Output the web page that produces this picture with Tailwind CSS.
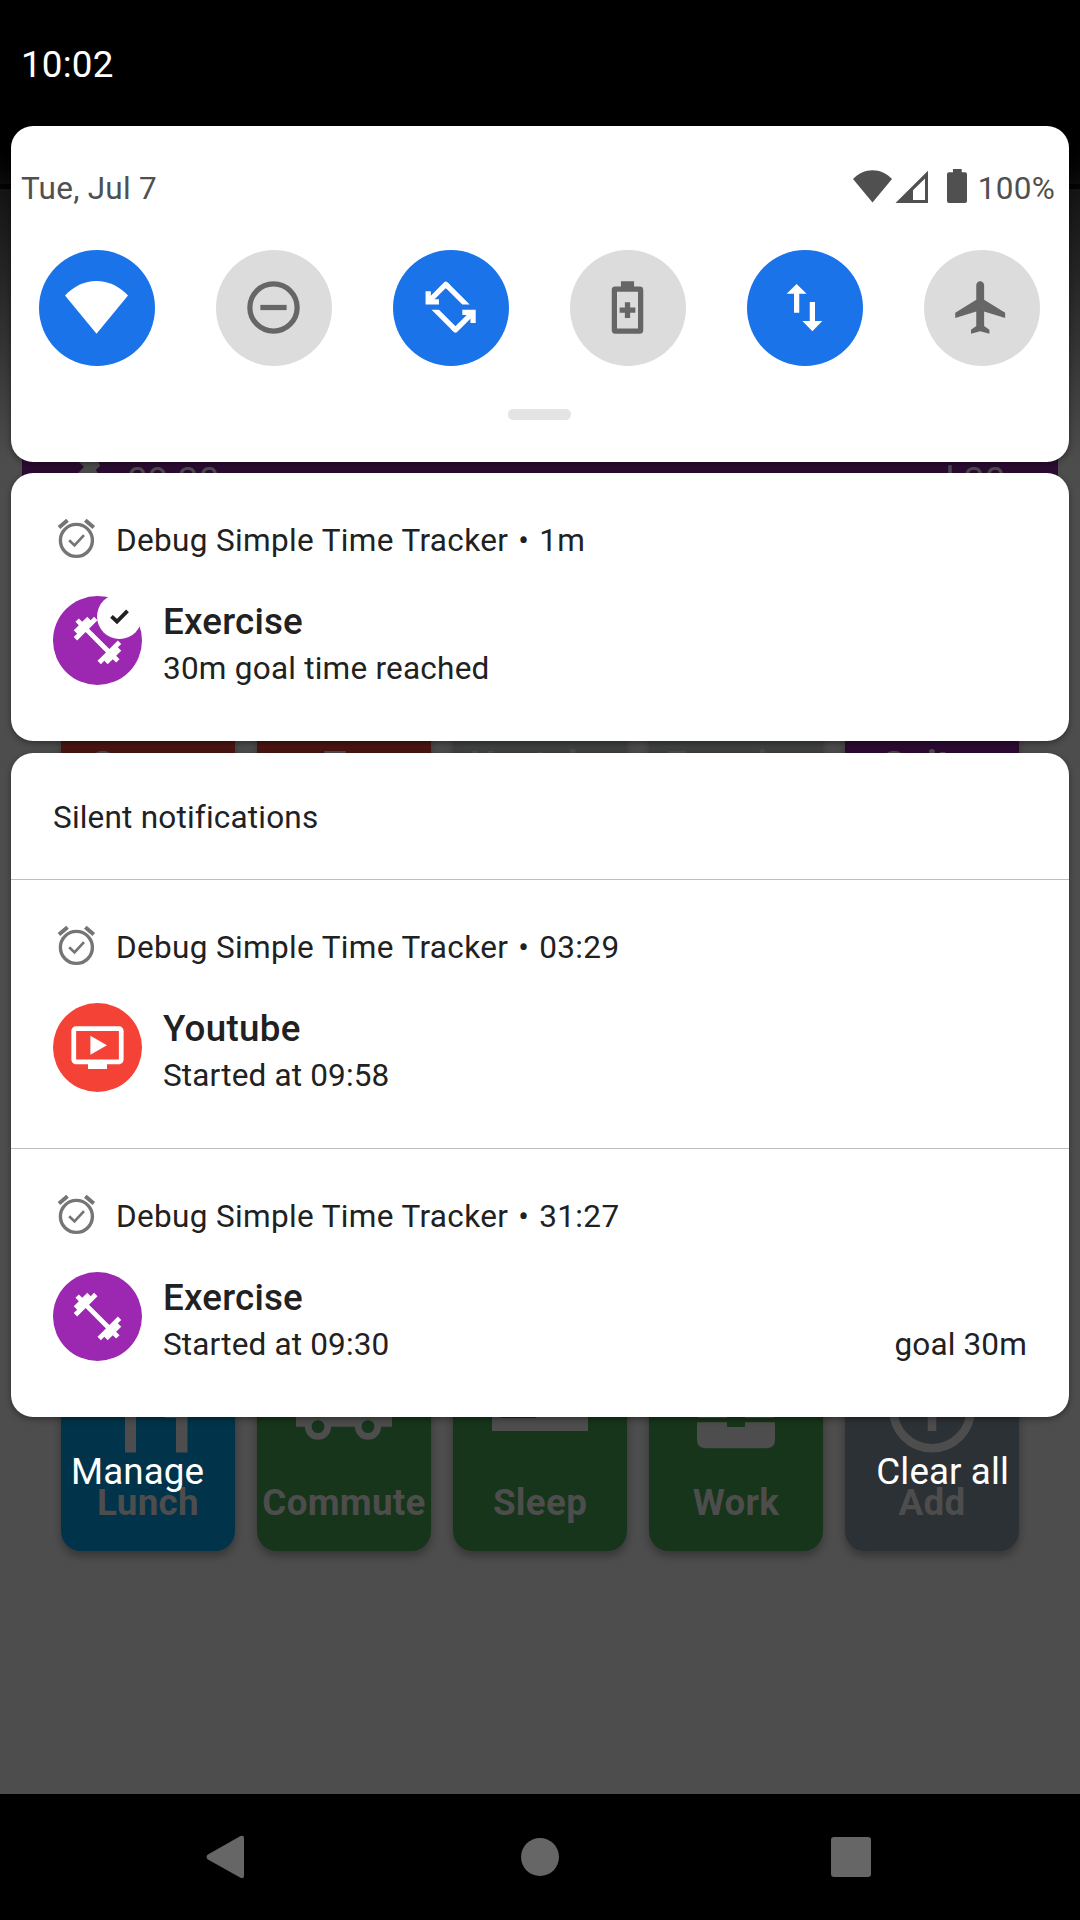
<!DOCTYPE html>
<html lang="en">
<head>
<meta charset="utf-8">
<title>Notifications</title>
<script src="https://cdn.jsdelivr.net/npm/@tailwindcss/browser@4"></script>
</head>
<body class="bg-black font-['Roboto',sans-serif] tracking-[0.2px]">
<svg class="hidden">
  <symbol id="alarm" viewBox="0 0 42 42">
    <g fill="none" stroke="#757575"><circle cx="21.4" cy="22.4" r="16" stroke-width="3.4"/><path d="M4 9.6 12.5 2.3M38.8 9.6 30.3 2.3" stroke-width="4"/><path d="M14.2 22.3 19.5 27.4 29 17.2" stroke-width="2.7"/></g>
  </symbol>
  <symbol id="dumbbell" viewBox="0 0 24 24"><path fill="#fff" d="M20.57 14.86L22 13.43 20.57 12 17 15.57 8.43 7 12 3.43 10.57 2 9.14 3.43 7.71 2 5.57 4.14 4.14 2.71 2.71 4.14l1.43 1.43L2 7.71l1.43 1.43L2 10.57 3.43 12 7 8.43 15.57 17 12 20.57 13.43 22l1.43-1.43L16.29 22l2.14-2.14 1.43 1.43 1.43-1.43-1.43-1.43L22 16.29z"/></symbol>
</svg>
<div class="relative w-[1080px] h-[1920px] overflow-hidden bg-[#4d4d4d]">

  <!-- dimmed app behind the shade -->
  <div class="absolute inset-0 flex flex-col">
    <div class="h-[126px] bg-black"></div>
    <div class="h-[58px] bg-linear-to-b from-black to-[#0c0c0c]"></div>
    <div class="h-[5px] bg-[#030303]"></div>
    <div class="h-[271px] bg-linear-to-b from-[#141414] to-[#4d4d4d]"></div>
    <div class="h-[26px] -mt-[6px] mx-[22px] bg-[#2d0b33] text-[#4d4d4d] text-[36.75px] leading-[43px] flex items-start overflow-hidden">
      <svg class="w-[24px] h-[19px] ml-[56px]" viewBox="0 0 24 19"><path fill="#4d4d4d" d="M0 7 6 13 0 19H20L17.7 16 22.2 11.7 20 7Z"/></svg>
      <span class="ml-[25px] mt-[5px]">09:30</span>
      <span class="ml-auto mr-[20px] mt-[5px]">goal 30m</span>
    </div>
    <div class="grid grid-cols-5 gap-x-[22px] mx-[61px] mt-[109px] text-[36.75px] leading-[43px] font-bold text-[#4d4d4d] text-center">
      <div class="h-[224px] rounded-[20px] bg-[#4a1512] pt-[154px] shadow-[0_4px_8px_rgba(0,0,0,0.25)]">Games</div>
      <div class="h-[224px] rounded-[20px] bg-[#4a1512] pt-[154px] shadow-[0_4px_8px_rgba(0,0,0,0.25)]">Tv</div>
      <div class="h-[224px] rounded-[20px] bg-[#3f4041] pt-[154px] shadow-[0_4px_8px_rgba(0,0,0,0.25)]">Youtube</div>
      <div class="h-[224px] rounded-[20px] bg-[#3f4041] pt-[154px] shadow-[0_4px_8px_rgba(0,0,0,0.25)]">Exercise</div>
      <div class="h-[224px] rounded-[20px] bg-[#2d0b33] pt-[154px] shadow-[0_4px_8px_rgba(0,0,0,0.25)]">Guitar</div>
    </div>
    <div class="grid grid-cols-5 gap-x-[22px] mx-[61px] mt-[514px] text-[36.75px] leading-[43px] font-bold text-[#4d4d4d] tracking-[0.3px]">
      <div class="h-[224px] rounded-[20px] bg-[#01344a] pt-[31px] flex flex-col items-center shadow-[0_5px_9px_rgba(0,0,0,0.3)]">
        <svg class="w-[104px] h-[104px] mb-[19px]" viewBox="0 0 104 104"><path fill="#4d4d4d" d="M29 0H40V94.500H29ZM69 60V0H91.500V94.500H80V60Z"/></svg>
        <span>Lunch</span></div>
      <div class="h-[224px] rounded-[20px] bg-[#17351a] pt-[31px] flex flex-col items-center shadow-[0_5px_9px_rgba(0,0,0,0.3)]">
        <svg class="w-[104px] h-[104px] mb-[19px]" viewBox="0 0 104 104"><path fill="#4d4d4d" d="M4 20H100V68.700H4Z"/><g fill="#17351a" stroke="#4d4d4d" stroke-width="6.700"><circle cx="26" cy="68.600" r="9.800"/><circle cx="76" cy="68.600" r="9.800"/></g></svg>
        <span>Commute</span></div>
      <div class="h-[224px] rounded-[20px] bg-[#17351a] pt-[31px] flex flex-col items-center shadow-[0_5px_9px_rgba(0,0,0,0.3)]">
        <svg class="w-[104px] h-[104px] mb-[19px]" viewBox="0 0 104 104"><path fill="#4d4d4d" d="M4 20H100V73H4Z"/><path fill="#17351a" d="M13 30H48V60H13Z"/></svg>
        <span>Sleep</span></div>
      <div class="h-[224px] rounded-[20px] bg-[#17351a] pt-[31px] flex flex-col items-center shadow-[0_5px_9px_rgba(0,0,0,0.3)]">
        <svg class="w-[104px] h-[104px] mb-[19px]" viewBox="0 0 104 104"><path fill="#4d4d4d" d="M14 20H90V60H61V52H43V60H14ZM13 64.300H43V69H61V64.300H91V82Q91 90.300 82 90.300H22Q13 90.300 13 82Z"/></svg>
        <span>Work</span></div>
      <div class="h-[224px] rounded-[20px] bg-[#2c3135] pt-[31px] flex flex-col items-center shadow-[0_5px_9px_rgba(0,0,0,0.3)]">
        <svg class="w-[104px] h-[104px] mb-[19px]" viewBox="0 0 104 104"><g fill="none" stroke="#4d4d4d" stroke-width="8.600"><circle cx="52" cy="51.500" r="38.700"/><path d="M52 30V73M30.500 51.500H73.500"/></g></svg>
        <span>Add</span></div>
    </div>
  </div>

  <!-- notification shade -->
  <div class="relative h-full flex flex-col">
    <div class="h-[126px] shrink-0 pt-[43px] pl-[21px] text-white text-[36.75px] leading-[43px]">10:02</div>

    <div class="mx-[11px] h-[336px] shrink-0 rounded-[22px] bg-white shadow-[0_2px_6px_rgba(0,0,0,0.4)] flex flex-col">
      <div class="flex items-start pt-[43px] pl-[10px] pr-[14px] text-[31.5px] leading-[37px] text-[#505050] h-[124px] tracking-[0.25px]">
        <span class="pt-px">Tue, Jul 7</span>
        <svg class="ml-auto w-[116px] h-[36px]" viewBox="0 0 116 36"><g fill="#505050"><path d="M0 10C5.500 4 12 1.200 19.500 1.200S33.500 4 39 10L19.500 33.500Z"/><path fill-rule="evenodd" d="M75 1.700V34H42.500ZM72 9.500 60 21.200V31H72Z"/><path d="M100 0H108.700V3.300H112Q114 3.300 114 5.300V32Q114 34 112 34H96Q94 34 94 32V5.300Q94 3.300 96 3.300H100Z"/></g></svg>
        <span class="pt-px ml-[9px]">100%</span>
      </div>
      <div class="flex justify-between pl-[28px] pr-[29px]">
        <div class="size-[116px] rounded-full bg-[#1a73e8] flex items-center justify-center pb-px pr-px"><svg class="size-[63px]" viewBox="0 0 24 24"><path fill="#fff" d="M24 7.400C20.800 4 16.600 1.900 12 1.900S3.200 4 0 7.400L12 22Z"/></svg></div>
        <div class="size-[116px] rounded-full bg-[#dcdcdc] flex items-center justify-center pb-px pr-px"><svg class="size-[63px]" viewBox="0 0 24 24"><g fill="none" stroke="#666" stroke-width="2"><circle cx="12" cy="12" r="9"/><path d="M7 12H17"/></g></svg></div>
        <div class="size-[116px] rounded-full bg-[#1a73e8] flex items-center justify-center pb-px pr-px"><svg class="size-[63px]" viewBox="0 0 24 24"><defs><g id="turn"><path fill="none" stroke="#fff" stroke-width="2" stroke-linejoin="round" d="M3.500 9.900 10.200 3.200 11.200 4.200"/><path fill="#fff" d="M11 2.590 19.310 10.900H16.490L10.200 4.610ZM2.500 5.800H4.500V8.900H7.600V10.900H2.500Z"/></g></defs><use href="#turn"/><use href="#turn" transform="rotate(180 12.05 11.87)"/></svg></div>
        <div class="size-[116px] rounded-full bg-[#dcdcdc] flex items-center justify-center pb-px pr-px"><svg class="size-[63px]" viewBox="0 0 24 24"><path fill="#666" fill-rule="evenodd" d="M9.500 2H14.500V4H16.700Q18 4 18 5.300V20.700Q18 22 16.700 22H7.300Q6 22 6 20.700V5.300Q6 4 7.300 4H9.500ZM8 6V20H16V6ZM11 10H13V12H15V14H13V16H11V14H9V12H11Z"/></svg></div>
        <div class="size-[116px] rounded-full bg-[#1a73e8] flex items-center justify-center pb-px pr-px"><svg class="size-[63px]" viewBox="0 0 24 24"><path fill="#fff" d="M9 3 12.800 6.800H10V14H8V6.800H5.200ZM15 21 18.800 17.100H16V9.900H14V17.100H11.200Z"/></svg></div>
        <div class="size-[116px] rounded-full bg-[#dcdcdc] flex items-center justify-center pb-px pr-px"><svg class="size-[63px]" viewBox="0 0 24 24"><path fill="#666" d="M21 16v-2l-8-5V3.500c0-.83-.67-1.500-1.500-1.500S10 2.670 10 3.500V9l-8 5v2l8-2.500V19l-2 1.500V22l3.500-1 3.500 1v-1.500L13 19v-5.500l8 2.500z"/></svg></div>
      </div>
      <div class="mt-[43px] ml-[497px] w-[63px] h-[11px] rounded-[5px] bg-[#e4e4e4]"></div>
    </div>

    <div class="mx-[11px] mt-[11px] h-[268px] shrink-0 rounded-[22px] bg-white shadow-[0_2px_6px_rgba(0,0,0,0.4)] text-[#212121] pt-[45px] px-[42px]">
      <div class="flex text-[31.5px] leading-[37px] h-[78px] tracking-[0.35px]">
        <svg class="size-[42px] ml-[2px]"><use href="#alarm"/></svg>
        <span class="ml-[19px] pt-[4px]">Debug Simple Time Tracker</span><span class="mx-[10px] pt-[4px]">•</span><span class="pt-[4px]">1m</span>
      </div>
      <div class="flex">
        <div class="relative size-[89px] rounded-full bg-[#9c27b0] flex items-center justify-center">
          <svg class="size-[57px]"><use href="#dumbbell"/></svg>
          <div class="absolute left-[44px] -top-[2px] size-[45px] rounded-full bg-white flex items-center justify-center">
            <svg class="size-[45px]" viewBox="0 0 45 45"><path fill="none" stroke="#212121" stroke-width="3.800" d="M14.500 22.300 20 27.500 30.500 16.800"/></svg>
          </div>
        </div>
        <div class="ml-[21px] pt-[4px]">
          <div class="text-[36.75px] leading-[43px] font-medium">Exercise</div>
          <div class="text-[31.5px] leading-[37px] mt-[7px] tracking-[0.23px]">30m goal time reached</div>
        </div>
      </div>
    </div>

    <div class="mx-[11px] mt-[12px] h-[664px] shrink-0 rounded-[22px] bg-white shadow-[0_2px_6px_rgba(0,0,0,0.4)] text-[#212121]">
      <div class="h-[127px] border-b border-[#bdbdbd] pt-[46px] pl-[42px] text-[31.5px] leading-[37px] text-[#202124]">Silent notifications</div>
      <div class="h-[269px] border-b border-[#bdbdbd] pt-[45px] px-[42px]">
        <div class="flex text-[31.5px] leading-[37px] h-[78px] tracking-[0.35px]">
          <svg class="size-[42px] ml-[2px]"><use href="#alarm"/></svg>
          <span class="ml-[19px] pt-[4px]">Debug Simple Time Tracker</span><span class="mx-[10px] pt-[4px]">•</span><span class="pt-[4px]">03:29</span>
        </div>
        <div class="flex">
          <div class="size-[89px] rounded-full bg-[#f44336] flex items-center justify-center">
            <svg class="size-[57px]" viewBox="0 0 24 24"><path fill="#fff" d="M21 3H3c-1.110 0-2 .89-2 2v12c0 1.100.89 2 2 2h5v2h8v-2h5c1.100 0 1.990-.9 1.990-2L23 5c0-1.110-.9-2-2-2zm0 14H3V5h18v12zm-5-6l-7 4V7z"/></svg>
          </div>
          <div class="ml-[21px] pt-[4px]">
            <div class="text-[36.75px] leading-[43px] font-medium tracking-[0.3px]">Youtube</div>
            <div class="text-[31.5px] leading-[37px] mt-[7px] tracking-[0.16px]">Started at 09:58</div>
          </div>
        </div>
      </div>
      <div class="h-[268px] pt-[45px] px-[42px]">
        <div class="flex text-[31.5px] leading-[37px] h-[78px] tracking-[0.35px]">
          <svg class="size-[42px] ml-[2px]"><use href="#alarm"/></svg>
          <span class="ml-[19px] pt-[4px]">Debug Simple Time Tracker</span><span class="mx-[10px] pt-[4px]">•</span><span class="pt-[4px]">31:27</span>
        </div>
        <div class="flex">
          <div class="size-[89px] rounded-full bg-[#9c27b0] flex items-center justify-center"><svg class="size-[57px]"><use href="#dumbbell"/></svg></div>
          <div class="ml-[21px] pt-[4px] grow">
            <div class="text-[36.75px] leading-[43px] font-medium">Exercise</div>
            <div class="text-[31.5px] leading-[37px] mt-[7px] flex justify-between tracking-[0.16px]"><span>Started at 09:30</span><span>goal 30m</span></div>
          </div>
        </div>
      </div>
    </div>

    <div class="flex justify-between mt-[33px] pl-[71px] pr-[71px] text-white text-[36.75px] leading-[43px] tracking-[0.1px]">
      <span>Manage</span><span>Clear all</span>
    </div>

    <div class="mt-auto h-[126px] bg-black flex items-center justify-between px-[205px]">
      <svg class="size-[44px]" viewBox="0 0 44 44"><path fill="#666" d="M2.500 19.800 35.500 1Q39 -.2 39 3V41Q39 44 35.500 42.800L2.500 24.200Q.5 22 2.500 19.800Z"/></svg>
      <svg class="size-[44px]" viewBox="0 0 44 44"><circle cx="22" cy="22" r="19" fill="#666"/></svg>
      <svg class="size-[44px]" viewBox="0 0 44 44"><rect x="0" y="2" width="40" height="40" rx="3" fill="#666"/></svg>
    </div>
  </div>
</div>
</body>
</html>
